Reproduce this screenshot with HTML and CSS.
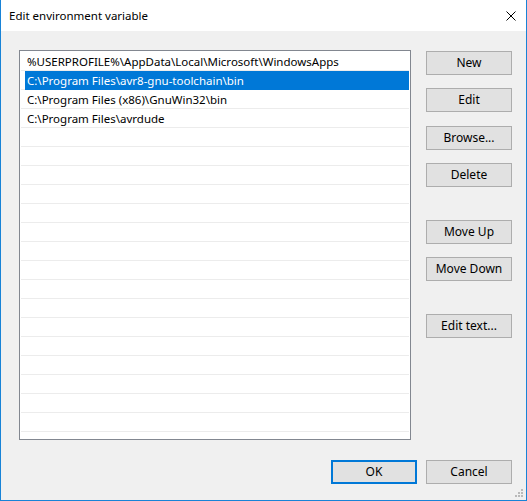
FILE: index.html
```html
<!DOCTYPE html>
<html lang="en">
<head>
  <meta charset="UTF-8" />
  <title>Edit environment variable</title>
  <link rel="stylesheet" href="styles.css">
</head>
<body>
  <div class="window">
    <div class="titlebar">
      <span class="title">Edit environment variable</span>
      <span class="close">
        <svg width="10" height="10" viewBox="0 0 10 10">
          <path d="M0.5 0.5 L9.5 9.5 M9.5 0.5 L0.5 9.5" stroke="#000" stroke-width="1" fill="none"/>
        </svg>
      </span>
    </div>

    <div class="content">
      <div class="main-row">
        <div class="listbox">
          <div class="row"><span class="label">%USERPROFILE%\AppData\Local\Microsoft\WindowsApps</span></div>
          <div class="row selected"><span class="label">C:\Program Files\avr8-gnu-toolchain\bin</span></div>
          <div class="row"><span class="label">C:\Program Files (x86)\GnuWin32\bin</span></div>
          <div class="row"><span class="label">C:\Program Files\avrdude</span></div>
          <div class="row"></div>
          <div class="row"></div>
          <div class="row"></div>
          <div class="row"></div>
          <div class="row"></div>
          <div class="row"></div>
          <div class="row"></div>
          <div class="row"></div>
          <div class="row"></div>
          <div class="row"></div>
          <div class="row"></div>
          <div class="row"></div>
          <div class="row"></div>
          <div class="row"></div>
          <div class="row"></div>
          <div class="row"></div>
          <div class="row"></div>
        </div>

        <div class="side-buttons">
          <button class="btn">New</button>
          <button class="btn gap-s">Edit</button>
          <button class="btn gap-m">Browse...</button>
          <button class="btn gap-s">Delete</button>
          <button class="btn gap-l">Move Up</button>
          <button class="btn gap-s">Move Down</button>
          <button class="btn gap-l">Edit text...</button>
        </div>
      </div>

      <div class="footer">
        <button class="btn default">OK</button>
        <button class="btn">Cancel</button>
      </div>
    </div>

    <svg class="grip" width="9" height="9" viewBox="0 0 9 9">
      <g fill="#b9b9b9">
        <rect x="6" y="0" width="2" height="2"/>
        <rect x="3" y="3" width="2" height="2"/>
        <rect x="6" y="3" width="2" height="2"/>
        <rect x="0" y="6" width="2" height="2"/>
        <rect x="3" y="6" width="2" height="2"/>
        <rect x="6" y="6" width="2" height="2"/>
      </g>
    </svg>
  </div>
</body>
</html>
```

FILE: styles.css
```css
:root {
  --accent: #0078d7;
  --frame: #1883d7;
  --face: #f0f0f0;
  --btn-face: #e1e1e1;
  --btn-border: #adadad;
}

body {
  margin: 0;
  padding: 0;
  background: #fff;
  font-family: 'Noto Sans', sans-serif;
  font-size: 11.5px;
  color: #000;
}

.window {
  position: relative;
  width: 527px;
  height: 501px;
  box-sizing: border-box;
  border: 1px solid var(--frame);
  border-top: none;
  display: flex;
  flex-direction: column;
  background: var(--face);
}

.titlebar {
  height: 31px;
  background: #fff;
  display: flex;
  align-items: center;
  justify-content: space-between;
  padding: 0 10px 0 8px;
  flex-shrink: 0;
}

.title {
  line-height: 16px;
}

.close {
  display: flex;
}

.content {
  flex: 1;
  display: flex;
  flex-direction: column;
}

.main-row {
  display: flex;
  margin-top: 19px;
  padding-left: 18px;
}

/* list of paths */
.listbox {
  width: 392px;
  height: 390px;
  box-sizing: border-box;
  border: 1px solid #828790;
  background: #fff;
  padding: 1px;
  overflow: hidden;
}

.row {
  height: 19px;
  padding-left: 4px;
  background: linear-gradient(#ececec, #ececec) bottom / 100% 1px no-repeat;
}

.label {
  display: block;
  height: 19px;
  line-height: 19px;
  padding-left: 2px;
  white-space: nowrap;
}

.row.selected .label {
  background: var(--accent);
  color: #fff;
}

.side-buttons {
  display: flex;
  flex-direction: column;
  margin-left: 15px;
  padding-top: 1px;
}

.btn {
  width: 86px;
  height: 24px;
  box-sizing: border-box;
  border: 1px solid var(--btn-border);
  background: var(--btn-face);
  font-family: inherit;
  font-size: 12px;
  color: #000;
  padding: 0;
  line-height: 20px;
}

.gap-s { margin-top: 13px; }
.gap-m { margin-top: 14px; }
.gap-l { margin-top: 33px; }

.btn.default {
  border: 2px solid var(--accent);
}

.footer {
  display: flex;
  justify-content: flex-end;
  gap: 9px;
  margin-top: 20px;
  padding-right: 14px;
}

.grip {
  position: absolute;
  right: 2px;
  bottom: 2px;
}
```
